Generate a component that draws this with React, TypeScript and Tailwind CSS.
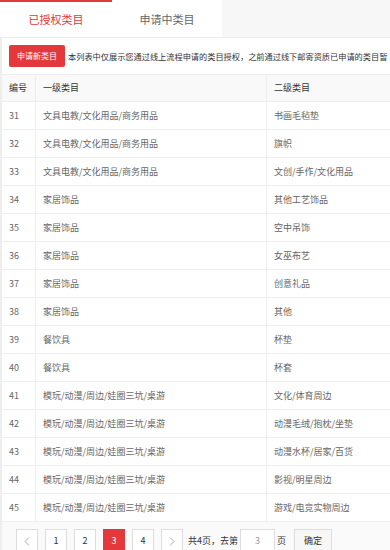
const rows: [number, string, string][] = [
  [31, '文具电教/文化用品/商务用品', '书画毛毡垫'],
  [32, '文具电教/文化用品/商务用品', '旗帜'],
  [33, '文具电教/文化用品/商务用品', '文创/手作/文化用品'],
  [34, '家居饰品', '其他工艺饰品'],
  [35, '家居饰品', '空中吊饰'],
  [36, '家居饰品', '女巫布艺'],
  [37, '家居饰品', '创意礼品'],
  [38, '家居饰品', '其他'],
  [39, '餐饮具', '杯垫'],
  [40, '餐饮具', '杯套'],
  [41, '模玩/动漫/周边/娃圈三坑/桌游', '文化/体育周边'],
  [42, '模玩/动漫/周边/娃圈三坑/桌游', '动漫毛绒/抱枕/坐垫'],
  [43, '模玩/动漫/周边/娃圈三坑/桌游', '动漫水杯/居家/百货'],
  [44, '模玩/动漫/周边/娃圈三坑/桌游', '影视/明星周边'],
  [45, '模玩/动漫/周边/娃圈三坑/桌游', '游戏/电竞实物周边'],
];

const pageBtn = 'w-[22px] h-[24px] flex items-center justify-center border border-[#ddd] bg-white text-[9px] text-[#333]';

export default function App() {
  return (
    <div className="w-[390px] h-[550px] overflow-hidden bg-white font-['Noto_Sans_CJK_SC','Noto_Sans',sans-serif]">
      {/* tabs */}
      <div className="flex h-[38px] bg-[#f7f7f7] border-b border-[#ececec]">
        <div className="w-[112px] bg-white border-t-2 border-[#e4393c] flex items-center justify-center text-[11px] text-[#e4393c]">
          已授权类目
        </div>
        <div className="w-[110px] bg-white flex items-center justify-center text-[11px] text-[#666] pt-[2px]">
          申请中类目
        </div>
      </div>

      <div className="border-l-2 border-[#eee] bg-[#fafafa] h-[512px]">
        <div className="bg-white">
          <div className="flex items-center pl-[7px] pt-[7px] pb-[7px] whitespace-nowrap overflow-hidden">
            <div className="w-[56px] h-[22px] shrink-0 rounded-[2px] bg-[#e4393c] text-white text-[8px] flex items-center justify-center">
              申请新类目
            </div>
            <span className="ml-[3px] text-[8.2px] text-[#333]">
              本列表中仅展示您通过线上流程申请的类目授权，之前通过线下邮寄资质已申请的类目暂
            </span>
          </div>

          {/* table */}
          <div className="w-[420px] text-[9px]">
            <div className="grid grid-cols-[34px_231px_1fr] h-[28px] bg-[#f9f9f9] border-y border-[#eee] text-[#333]">
              <div className="flex items-center pl-[7px] border-r border-[#eee]">编号</div>
              <div className="flex items-center pl-[7px] border-r border-[#eee]">一级类目</div>
              <div className="flex items-center pl-[7px]">二级类目</div>
            </div>
            {rows.map(([id, first, second]) => (
              <div key={id} className="grid grid-cols-[34px_231px_1fr] h-[28px] border-b border-[#eee] text-[#666]">
                <div className="flex items-center pl-[7px] border-r border-[#eee]">{id}</div>
                <div className="flex items-center pl-[7px] border-r border-[#eee]">{first}</div>
                <div className="flex items-center pl-[7px]">{second}</div>
              </div>
            ))}
          </div>
        </div>

        {/* pagination */}
        <div className="flex items-center pl-[14px] pt-[7px] text-[9px] text-[#333]">
          <div className="flex gap-[7px] items-center">
            <div className={pageBtn}>
              <svg width="6" height="9" viewBox="0 0 6 9" fill="none" stroke="#aaa" strokeWidth="1">
                <path d="M5 0.5 L1 4.5 L5 8.5" />
              </svg>
            </div>
            <div className={pageBtn}>1</div>
            <div className={pageBtn}>2</div>
            <div className="w-[22px] h-[24px] flex items-center justify-center bg-[#e4393c] text-white border border-[#e4393c]">3</div>
            <div className={pageBtn}>4</div>
            <div className={pageBtn}>
              <svg width="6" height="9" viewBox="0 0 6 9" fill="none" stroke="#aaa" strokeWidth="1">
                <path d="M1 0.5 L5 4.5 L1 8.5" />
              </svg>
            </div>
          </div>
          <span className="ml-[5px]">共4页，去第</span>
          <div className="ml-[2px] w-[35px] h-[24px] border border-[#ddd] bg-white flex items-center justify-center text-[#999]">3</div>
          <span className="ml-[2px]">页</span>
          <div className="ml-[8px] w-[38px] h-[24px] border border-[#ddd] bg-[#f7f7f7] flex items-center justify-center">确定</div>
        </div>
      </div>
    </div>
  );
}
